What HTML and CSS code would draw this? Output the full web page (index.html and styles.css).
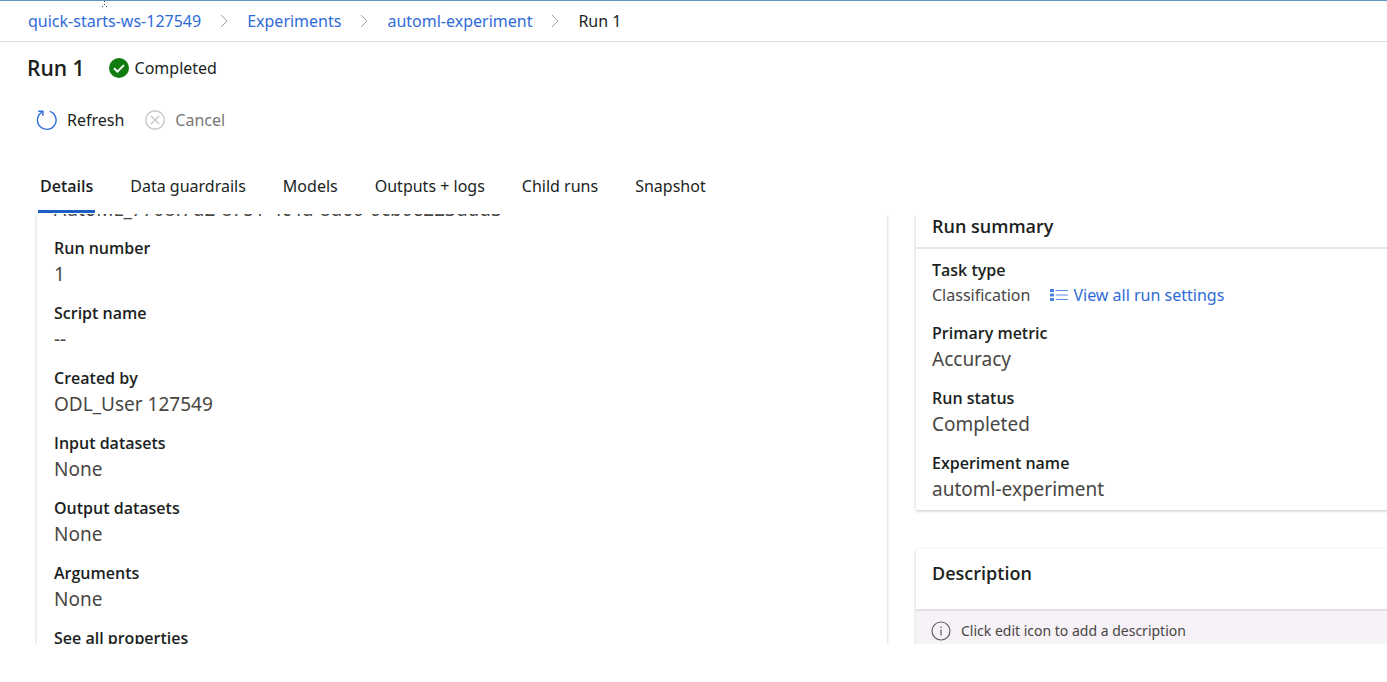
FILE: index.html
```html
<!DOCTYPE html>
<html lang="en">
<head>
<meta charset="utf-8">
<title>Run 1</title>
<link rel="stylesheet" href="styles.css">
</head>
<body>
<div class="page">
  <svg class="pointer" viewBox="0 0 8 6" aria-hidden="true"><path d="M3 0h1v1h-1zM3 3h1v1h-1zM1 5h1v1h-1zM5 5h1v1h-1z" fill="#333"/></svg>
  <nav class="breadcrumb" aria-label="Breadcrumb">
    <a href="#">quick-starts-ws-127549</a>
    <svg class="chevron" viewBox="0 0 8 12"><path d="M1 0l6 6-6 6"/></svg>
    <a href="#">Experiments</a>
    <svg class="chevron" viewBox="0 0 8 12"><path d="M1 0l6 6-6 6"/></svg>
    <a href="#">automl-experiment</a>
    <svg class="chevron" viewBox="0 0 8 12"><path d="M1 0l6 6-6 6"/></svg>
    <span>Run 1</span>
  </nav>
  <header class="title-row">
    <h1>Run 1</h1>
    <svg class="status-icon" viewBox="0 0 20 20"><circle cx="10" cy="10" r="10" fill="#107c10"/><path d="M5 10.300l3.400 3.400 6.600-6.600" fill="none" stroke="#fff" stroke-width="2"/></svg>
    <span>Completed</span>
  </header>
  <div class="commands">
    <button type="button"><svg class="command-icon" viewBox="0 0 22 22" fill="none" stroke="#2f6bd8" stroke-width="1.400"><path d="M13.800 2.300A9.300 9.300 0 1 1 6 3.100"/><path d="M2.300 2.200h4.600v4.600"/></svg>Refresh</button>
    <button type="button" class="disabled" disabled><svg class="command-icon" viewBox="0 0 22 22" fill="none" stroke="#c8c8c8" stroke-width="1.400"><circle cx="11" cy="11" r="9.300"/><path d="M7 7l8 8M15 7l-8 8"/></svg>Cancel</button>
  </div>
  <div class="tabs" role="tablist">
    <button type="button" role="tab" class="active" aria-selected="true">Details</button>
    <button type="button" role="tab">Data guardrails</button>
    <button type="button" role="tab">Models</button>
    <button type="button" role="tab">Outputs + logs</button>
    <button type="button" role="tab">Child runs</button>
    <button type="button" role="tab">Snapshot</button>
  </div>
  <main class="content">
    <section class="card properties">
      <dl class="fields scrolled">
        <div><dd>AutoML_7708f7d2-8751-4c4d-8d60-0cb0e223ddd3</dd></div>
        <div><dt>Run number</dt><dd>1</dd></div>
        <div><dt>Script name</dt><dd>--</dd></div>
        <div><dt>Created by</dt><dd>ODL_User 127549</dd></div>
        <div><dt>Input datasets</dt><dd>None</dd></div>
        <div><dt>Output datasets</dt><dd>None</dd></div>
        <div><dt>Arguments</dt><dd>None</dd></div>
        <div><dt>See all properties</dt></div>
      </dl>
    </section>
    <div class="side">
      <section class="card summary">
        <h2>Run summary</h2>
        <dl class="fields">
          <div><dt>Task type</dt><dd class="task"><span>Classification</span><a href="#"><svg class="list-icon" viewBox="0 0 18 12"><path d="M0 0h4v3H0zM0 4.500h4v3H0zM0 9h4v3H0z" fill="#4a80e4"/><path d="M5.500 1.500H18M5.500 6H18M5.500 10.500H18" stroke="#5a8bea" stroke-width="1.200"/></svg>View all run settings</a></dd></div>
          <div><dt>Primary metric</dt><dd>Accuracy</dd></div>
          <div><dt>Run status</dt><dd>Completed</dd></div>
          <div><dt>Experiment name</dt><dd>automl-experiment</dd></div>
        </dl>
      </section>
      <section class="card description">
        <h2>Description</h2>
        <p><svg class="info-icon" viewBox="0 0 20 20"><circle cx="10" cy="10" r="9" fill="none" stroke="#605e5c" stroke-width="1.200"/><path d="M10 8.500v6M10 5.500v1.500" stroke="#605e5c" stroke-width="1.200"/></svg>Click edit icon to add a description</p>
      </section>
    </div>
  </main>
</div>
</body>
</html>
```
FILE: styles.css
```css
* { box-sizing: border-box; }
body {
  margin: 0;
  background: #fff;
  color: #201f1e;
  font: 16px/24px "Noto Sans", "Open Sans", sans-serif;
}
h1, h2, dl, dd, p { margin: 0; }
h1, h2, dt, .tabs .active { font-family: "Open Sans", "Noto Sans", sans-serif; font-weight: 600; }
a { color: #2f6bd8; text-decoration: none; }
button {
  border: 0;
  padding: 0;
  background: none;
  color: inherit;
  font: inherit;
}
svg { flex: none; }
.page {
  position: relative;
  display: flex;
  flex-direction: column;
  height: 100vh;
  padding-bottom: 38px;
  border-top: 1px solid #6394c4;
  overflow: hidden;
}
.pointer { position: absolute; left: 101px; top: 0; width: 8px; height: 6px; }
.breadcrumb {
  display: flex;
  align-items: center;
  gap: 19px;
  height: 41px;
  padding-left: 28px;
  border-bottom: 1px solid #dcdcdc;
}
.chevron { width: 8px; height: 12px; fill: none; stroke: #a0a0a0; stroke-width: 1; }
.title-row {
  display: flex;
  align-items: center;
  height: 52px;
  padding-left: 27px;
}
h1 { font-size: 21px; }
.status-icon { width: 20px; height: 20px; margin: 0 6px 0 24px; }
.commands {
  display: flex;
  align-items: center;
  gap: 20px;
  height: 51px;
  padding-left: 36px;
}
.commands button { display: flex; align-items: center; gap: 9px; }
.commands .disabled { color: #797775; }
.command-icon { width: 22px; height: 22px; }
.tabs {
  display: flex;
  gap: 33px;
  margin-top: 15px;
  padding-left: 38px;
}
.tabs button { height: 53px; padding: 2px 2px 0; border-bottom: 3px solid transparent; }
.tabs .active { border-color: #1b5fc0; }
.content {
  flex: 1;
  min-height: 0;
  display: grid;
  grid-template-columns: 850fr 471fr;
  gap: 29px;
  padding-left: 37px;
  margin-top: 1px;
  overflow: hidden;
}
.card { background: #fff; box-shadow: 0 1px 3px #0000003d; }
.fields { display: grid; gap: 14px; }
.fields dt { line-height: 25px; }
.fields dd { color: #484644; font-size: 19px; line-height: 26px; }
.properties { padding-left: 17px; }
.scrolled { margin-top: -18px; }
.side { display: flex; flex-direction: column; gap: 39px; margin-right: -8px; }
h2 { font-size: 18px; }
.summary h2 { padding: 0 16px 8px; line-height: 25px; border-bottom: 2px solid #e6e6e6; }
.summary .fields { padding: 9px 16px 8px; }
.fields .task { display: flex; gap: 20px; font-size: 16px; line-height: 24px; }
.task a { display: flex; align-items: center; gap: 5px; }
.list-icon { width: 18px; height: 12px; }
.description h2 { padding: 12px 16px 24px; }
.description p {
  display: flex;
  align-items: center;
  gap: 10px;
  height: 42px;
  padding: 0 15px;
  border-top: 2px solid #e4e0e6;
  background: #f6f2f7;
  color: #484644;
  font-size: 14px;
}
.info-icon { width: 20px; height: 20px; }
```
